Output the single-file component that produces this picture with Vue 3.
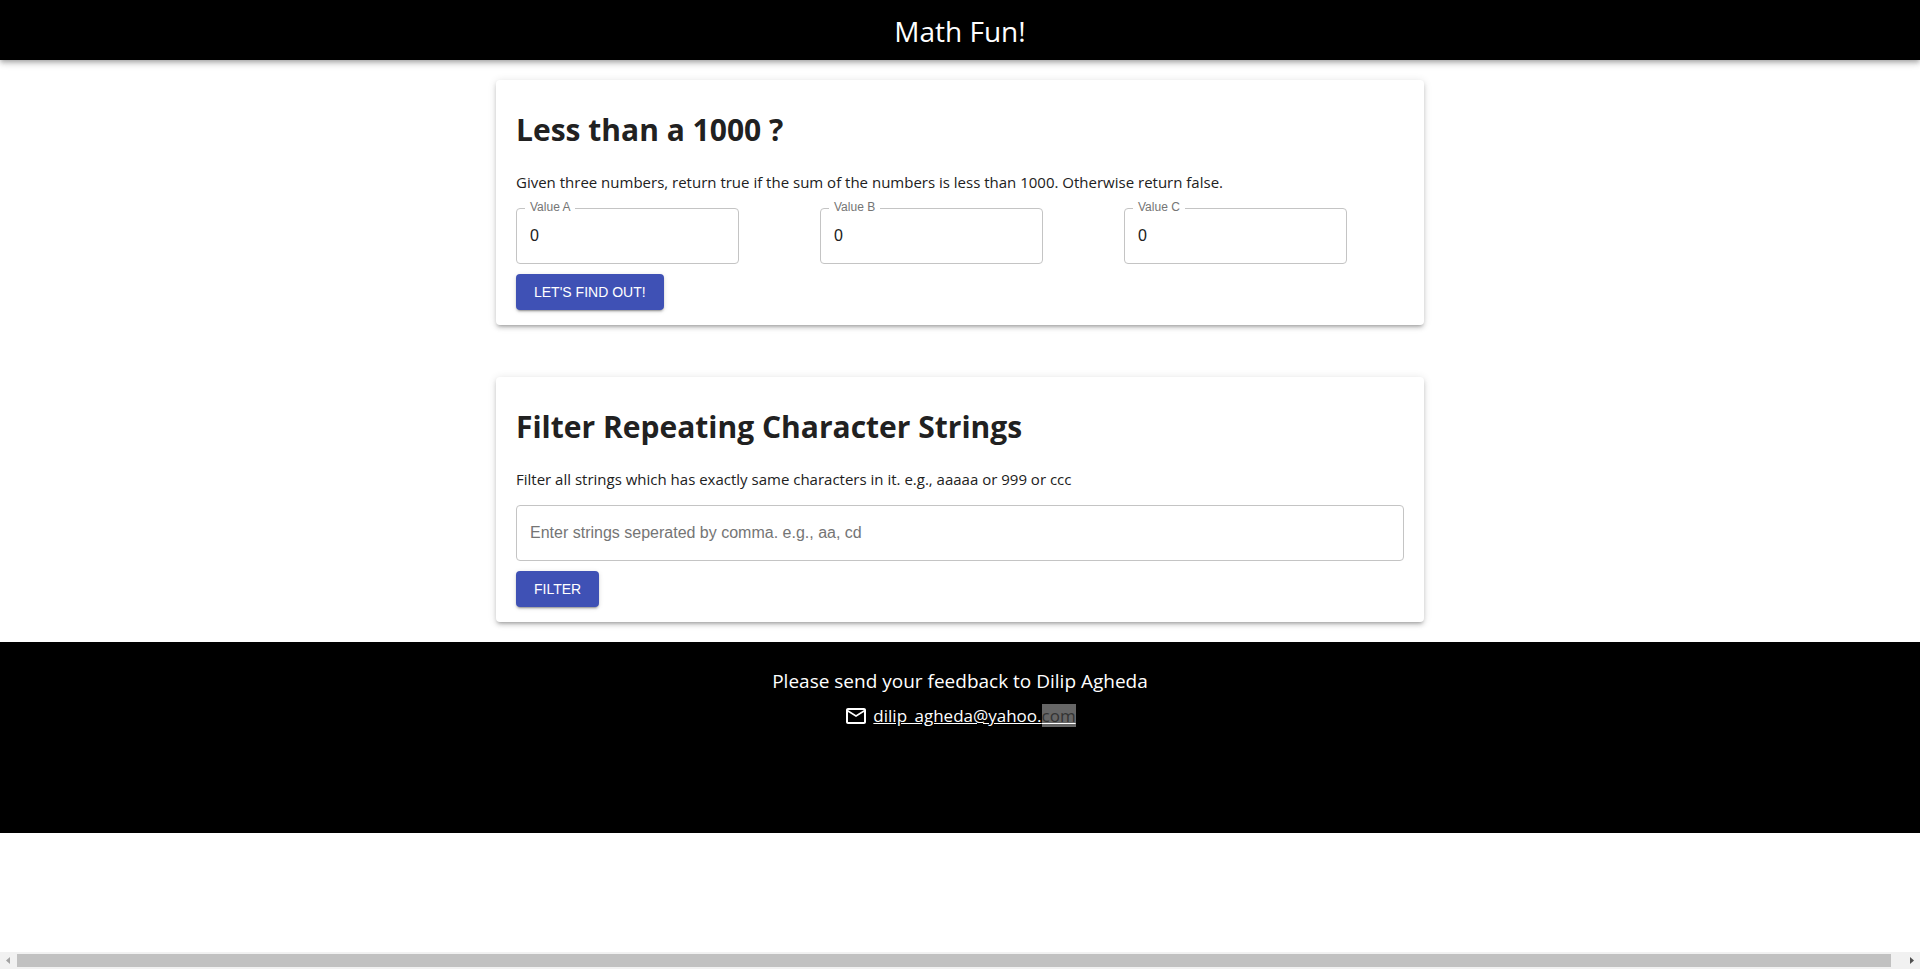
<script setup>
import { reactive, ref } from 'vue'

const values = reactive([
  { id: 'value-a', label: 'Value A', value: '0' },
  { id: 'value-b', label: 'Value B', value: '0' },
  { id: 'value-c', label: 'Value C', value: '0' }
])
const strings = ref('')
</script>

<template>
  <div class="page">
    <header class="bar">Math Fun!</header>

    <main class="content">
      <section class="card">
        <h1>Less than a 1000 ?</h1>
        <p>Given three numbers, return true if the sum of the numbers is less than 1000. Otherwise return false.</p>
        <div class="values">
          <div v-for="item in values" :key="item.id" class="field">
            <label :for="item.id">{{ item.label }}</label>
            <input :id="item.id" v-model="item.value" type="text" />
          </div>
        </div>
        <button type="button" class="action">LET'S FIND OUT!</button>
      </section>

      <section class="card">
        <h1>Filter Repeating Character Strings</h1>
        <p>Filter all strings which has exactly same characters in it. e.g., aaaaa or 999 or ccc</p>
        <div class="field wide">
          <input
            v-model="strings"
            type="text"
            aria-label="Strings"
            placeholder="Enter strings seperated by comma. e.g., aa, cd"
          />
        </div>
        <button type="button" class="action">FILTER</button>
      </section>
    </main>

    <footer class="footer">
      <div class="feedback">Please send your feedback to Dilip Agheda</div>
      <div class="contact">
        <svg width="24" height="24" viewBox="0 0 24 24" fill="currentColor" aria-hidden="true">
          <path d="M20 4H4c-1.1 0-2 .9-2 2v12c0 1.1.9 2 2 2h16c1.1 0 2-.9 2-2V6c0-1.1-.9-2-2-2zm0 14H4V8l8 5 8-5v10zm-8-7L4 6h16l-8 5z" />
        </svg>
        <a href="mailto:dilip_agheda@yahoo.com">dilip_agheda@yahoo.<span class="selected">com</span></a>
      </div>
    </footer>

    <div class="scrollbar" aria-hidden="true">
      <svg class="arrow left" width="17" height="17" viewBox="0 0 17 17"><path d="M10 5v7L6 8.500z" /></svg>
      <div class="thumb"></div>
      <svg class="arrow" width="17" height="17" viewBox="0 0 17 17"><path d="M7 5v7l4-3.500z" /></svg>
    </div>
  </div>
</template>

<style>
body {
  margin: 0;
  background: #fff;
}
</style>

<style scoped>
.page {
  display: flex;
  flex-direction: column;
  min-height: 100vh;
  font-family: "Open Sans", "Noto Sans", sans-serif;
  color: #212121;
}

.bar {
  display: flex;
  align-items: center;
  justify-content: center;
  box-sizing: border-box;
  height: 60px;
  padding-top: 2px;
  background: #000;
  color: #fff;
  font-size: 28px;
  line-height: 40px;
  box-shadow: 0 2px 4px -1px rgba(0, 0, 0, 0.2), 0 4px 5px 0 rgba(0, 0, 0, 0.14), 0 1px 10px 0 rgba(0, 0, 0, 0.12);
}

.content {
  display: flex;
  flex-direction: column;
  gap: 52px;
  box-sizing: border-box;
  width: 100%;
  max-width: 968px;
  margin: 0 auto;
  padding: 20px;
}

.card {
  padding: 28px 20px 15px;
  border-radius: 4px;
  background: #fff;
  box-shadow: 0 3px 3px -2px rgba(0, 0, 0, 0.2), 0 3px 4px 0 rgba(0, 0, 0, 0.14), 0 1px 8px 0 rgba(0, 0, 0, 0.12);
}

h1 {
  margin: 0 0 18px;
  font-size: 30px;
  line-height: 44px;
  font-weight: 700;
}

p {
  margin: 0 0 14px;
  font-size: 15px;
  line-height: 24px;
}

.values {
  display: grid;
  grid-template-columns: repeat(3, 1fr);
  gap: 24px;
}

.field {
  position: relative;
  display: flex;
  max-width: 223px;
}

.field.wide {
  max-width: none;
}

.field label {
  position: absolute;
  top: -9px;
  left: 9px;
  padding: 0 5px;
  background: #fff;
  color: #757575;
  font-family: "Liberation Sans", Arial, sans-serif;
  font-size: 12px;
  line-height: 16px;
}

.field input {
  box-sizing: border-box;
  width: 100%;
  height: 56px;
  padding: 0 13px;
  border: 1px solid #c4c4c4;
  border-radius: 4px;
  background: #fff;
  color: #212121;
  font-family: "Liberation Sans", Arial, sans-serif;
  font-size: 16px;
}

.field input::placeholder {
  color: #757575;
  opacity: 1;
}

.action {
  display: block;
  height: 36px;
  margin-top: 10px;
  padding: 0 18px;
  border: 0;
  border-radius: 4px;
  background: #3f51b5;
  color: #fff;
  font-family: "Liberation Sans", Arial, sans-serif;
  font-size: 14px;
  box-shadow: 0 3px 1px -2px rgba(0, 0, 0, 0.2), 0 2px 2px 0 rgba(0, 0, 0, 0.14), 0 1px 5px 0 rgba(0, 0, 0, 0.12);
}

.footer {
  display: flex;
  flex-direction: column;
  align-items: center;
  box-sizing: border-box;
  min-height: 191px;
  padding: 25px 20px;
  background: #000;
  color: #fff;
}

.feedback {
  font-size: 19px;
  line-height: 28px;
}

.contact {
  display: flex;
  align-items: center;
  gap: 5px;
  margin-top: 9px;
  font-size: 17px;
  line-height: 24px;
}

.contact a {
  color: #fff;
}

.selected {
  background: #666;
  color: #333;
}

.scrollbar {
  display: flex;
  align-items: center;
  height: 17px;
  margin-top: auto;
  background: #f1f1f1;
}

.thumb {
  flex: 1;
  height: 13px;
  margin-right: 12px;
  background: #c1c1c1;
}

.arrow {
  fill: #505050;
}

.arrow.left {
  fill: #a3a3a3;
}
</style>
